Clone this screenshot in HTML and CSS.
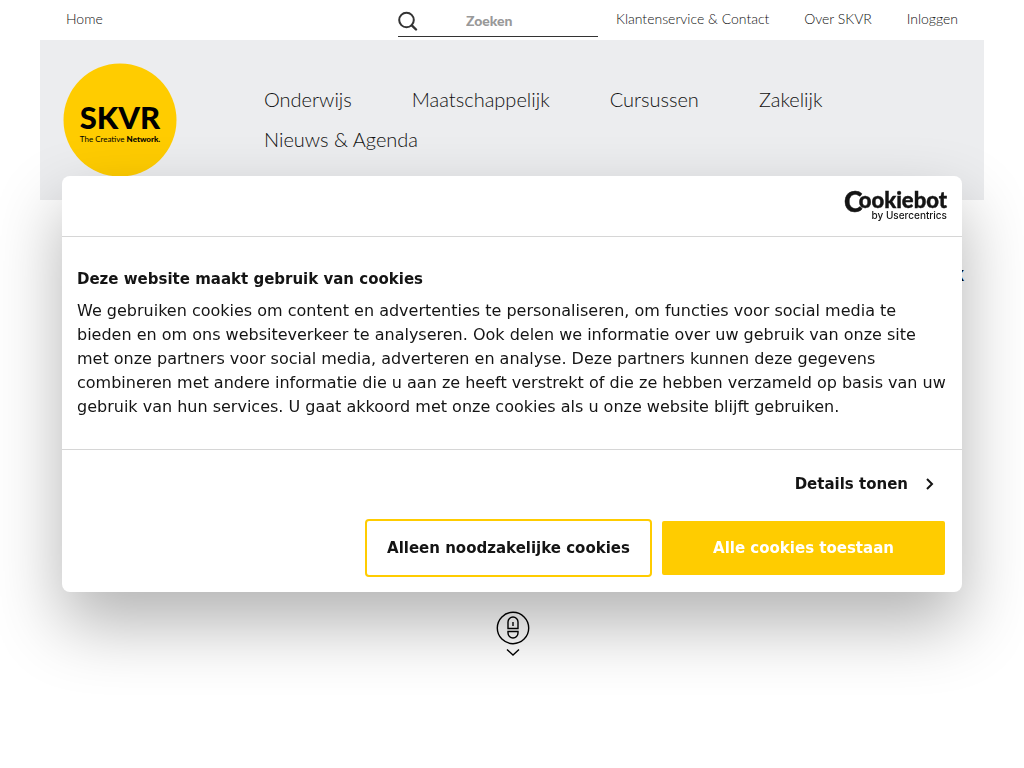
FILE: index.html
```
<!DOCTYPE html>
<html lang="nl">
<head>
    <meta charset="UTF-8">
    <meta name="viewport" content="width=device-width, initial-scale=1.0">
    <title>SKVR</title>
    <link rel="stylesheet" href="styles.css">
</head>
<body>
    <div class="page">
        <div class="topbar">
            <a href="#">Home</a>
            <form class="search">
                <button type="submit" aria-label="Zoeken">
                    <svg width="20" height="20" viewBox="0 0 20 20" fill="none" stroke="#333" stroke-width="2">
                        <circle cx="8.5" cy="9" r="7.3"/>
                        <path d="M13.8 14.3 18 18.500" stroke-width="2.4" stroke-linecap="round"/>
                    </svg>
                </button>
                <input type="text" placeholder="Zoeken" aria-label="Zoekterm">
            </form>
            <nav class="topbar-links">
                <a href="#">Klantenservice &amp; Contact</a>
                <a href="#">Over SKVR</a>
                <a href="#">Inloggen</a>
            </nav>
        </div>

        <header class="header">
            <a class="logo" href="#" aria-label="SKVR">
                <svg width="114" height="114" viewBox="0 0 114 114">
                    <circle cx="57" cy="57" r="56.5" fill="#ffcc00"/>
                    <text class="logo-name" x="57" y="66" text-anchor="middle">SKVR</text>
                    <text class="logo-sub" x="57" y="79" text-anchor="middle">The Creative <tspan class="logo-bold">Network.</tspan></text>
                </svg>
            </a>
            <nav class="menu">
                <a href="#">Onderwijs</a>
                <a href="#">Maatschappelijk</a>
                <a href="#">Cursussen</a>
                <a href="#">Zakelijk</a>
                <a href="#">Nieuws &amp; Agenda</a>
            </nav>
        </header>

        <main class="main">
            <p class="intro">k</p>
            <a class="scroll" href="#" aria-label="Scroll naar beneden">
                <svg width="34" height="46" viewBox="0 0 34 46" fill="none" stroke="#000" stroke-width="1.4">
                    <circle cx="17" cy="17" r="15.7"/>
                    <path d="M12 17.5V11a5 5 0 0 1 10 0v6.500z"/>
                    <path d="M17 11v4"/>
                    <path d="M12 20.500h10v1.500a5 5 0 0 1-10 0z"/>
                    <path d="M11 38.500l6 5.500 6-5.500"/>
                </svg>
            </a>
        </main>
    </div>

    <div class="cookie" role="dialog" aria-labelledby="cookie-title">
        <div class="cookie-head">
            <svg class="bot" width="104" height="32" viewBox="0 0 104 32" fill="#141414" role="img" aria-label="Cookiebot by Usercentrics">
                <text class="bot-name bot-c" x="0" y="22">C</text>
                <text class="bot-name" x="103" y="18" text-anchor="end">ookiebot</text>
                <text class="bot-sub" x="103" y="29" text-anchor="end">by Usercentrics</text>
            </svg>
        </div>
        <div class="cookie-body">
            <h2 id="cookie-title">Deze website maakt gebruik van cookies</h2>
            <p>We gebruiken cookies om content en advertenties te personaliseren, om functies voor social media te bieden en om ons websiteverkeer te analyseren. Ook delen we informatie over uw gebruik van onze site met onze partners voor social media, adverteren en analyse. Deze partners kunnen deze gegevens combineren met andere informatie die u aan ze heeft verstrekt of die ze hebben verzameld op basis van uw gebruik van hun services. U gaat akkoord met onze cookies als u onze website blijft gebruiken.</p>
        </div>
        <div class="cookie-foot">
            <a class="details" href="#">Details tonen
                <svg width="8" height="12" viewBox="0 0 8 12" fill="none" stroke="#141414" stroke-width="2"><path d="M1 1l5 5-5 5"/></svg>
            </a>
            <div class="buttons">
                <button class="btn">Alleen noodzakelijke cookies</button>
                <button class="btn btn-primary">Alle cookies toestaan</button>
            </div>
        </div>
    </div>
</body>
</html>
```
FILE: styles.css
```
* {
    box-sizing: border-box;
}
body {
    margin: 0;
    font-family: Lato, sans-serif;
    font-weight: 300;
    color: #111;
    background-color: #fff;
}
a {
    color: #111;
    text-decoration: none;
}
.page {
    margin: 0 40px;
}
.topbar {
    display: grid;
    grid-template-columns: 1fr 200px 342px;
    column-gap: 18px;
    height: 40px;
    padding: 0 26px;
    font-size: 14px;
    line-height: 38px;
}
.topbar-links {
    display: flex;
    justify-content: space-between;
}
.search {
    display: flex;
    align-items: center;
    height: 37px;
    padding-top: 5px;
    border-bottom: 1px solid #333;
}
.search button {
    display: flex;
    padding: 0;
    border: none;
    background: none;
}
.search input {
    flex: 1;
    min-width: 0;
    padding: 0 0 0 48px;
    border: none;
    outline: none;
    background: none;
    font-family: Lato, sans-serif;
    font-size: 14px;
    font-weight: 900;
}
.search input::placeholder {
    color: #999;
}
.header {
    display: flex;
    align-items: flex-start;
    gap: 87px;
    min-height: 160px;
    padding: 23px;
    background-color: #ecedef;
}
.logo {
    display: flex;
}
.logo-name {
    fill: #000;
    font-size: 31px;
    font-weight: 900;
}
.logo-sub {
    fill: #000;
    font-size: 8px;
    font-weight: 400;
}
.logo-bold {
    font-weight: 900;
}
.menu {
    display: flex;
    flex-wrap: wrap;
    column-gap: 60px;
    padding-top: 16px;
    font-size: 20px;
    line-height: 40px;
}
.main {
    display: flex;
    flex-direction: column;
    align-items: center;
    padding: 58px 20px 60px 22px;
}
.intro {
    align-self: flex-end;
    margin: 0 0 323px;
    color: #000;
    font-size: 20px;
    font-weight: 900;
    line-height: 30px;
}
.cookie {
    position: fixed;
    top: 50%;
    left: 50%;
    width: 900px;
    max-width: 100%;
    transform: translate(-50%, -50%);
    border-radius: 8px;
    background-color: #fff;
    box-shadow: 0 32px 68px rgba(0, 0, 0, 0.3);
    color: #141414;
    font-family: "DejaVu Sans", sans-serif;
    font-size: 15px;
    font-weight: 400;
    line-height: 24px;
}
.cookie-head {
    display: flex;
    justify-content: flex-end;
    padding: 14px 14px 14px 16px;
    border-bottom: 1px solid #d6d6d6;
}
.bot {
    overflow: visible;
}
.bot-name {
    font-family: Lato, sans-serif;
    font-size: 22px;
    font-weight: 900;
    stroke: #141414;
    stroke-width: 0.4px;
}
.bot-c {
    font-size: 28px;
}
.bot-sub {
    font-family: Inter, sans-serif;
    font-size: 10px;
    font-weight: 500;
}
.cookie-body {
    padding: 30px 15px;
    border-bottom: 1px solid #d6d6d6;
}
.cookie-body h2 {
    margin: 0 0 8px;
    font-size: 15px;
    line-height: 24px;
}
.cookie-body p {
    margin: 0;
    font-size: 16px;
}
.cookie-foot {
    display: flex;
    flex-direction: column;
    align-items: flex-end;
    gap: 23px;
    padding: 22px 17px 15px;
}
.details {
    display: flex;
    align-items: center;
    gap: 18px;
    padding-right: 11px;
    color: #141414;
    font-weight: bold;
}
.buttons {
    display: flex;
    align-items: center;
    gap: 10px;
}
.btn {
    width: 287px;
    height: 58px;
    border: 2px solid #ffcc00;
    border-radius: 4px;
    background-color: #fff;
    color: #141414;
    font-family: inherit;
    font-size: 15px;
    font-weight: bold;
    cursor: pointer;
}
.btn-primary {
    width: 283px;
    height: 54px;
    border-radius: 2px;
    background-color: #ffcc00;
    color: #fff;
}
```
